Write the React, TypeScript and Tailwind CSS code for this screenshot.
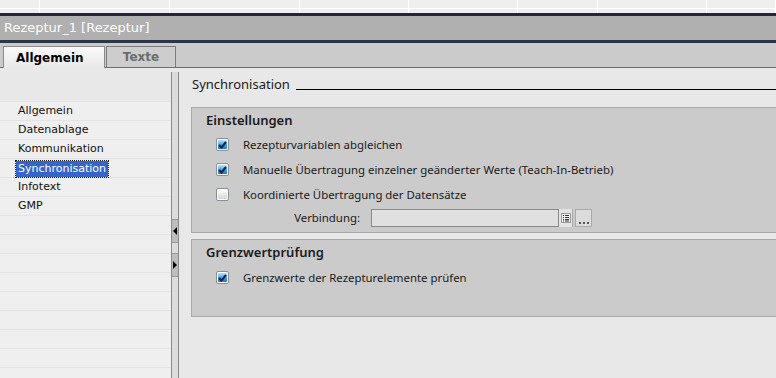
import React from 'react'

const NAV = ['Allgemein', 'Datenablage', 'Kommunikation', 'Synchronisation', 'Infotext', 'GMP']
const GRID_COLS = [40, 130, 130, 109, 109, 80, 109, 69]

function CheckBox({ checked }: { checked: boolean }) {
  return (
    <div className="w-[13px] h-[13px] rounded-[2px] border border-[#8a8f96] bg-white p-[1px] shrink-0">
      {checked ? (
        <div className="w-full h-full rounded-[1px] bg-gradient-to-b from-[#b9e4fb] via-[#4aa6e6] to-[#1d73c4] flex items-center justify-center">
          <svg width="9" height="8" viewBox="0 0 9 8">
            <path d="M1 4 L3.5 6.5 L8 1" fill="none" stroke="#15244f" strokeWidth="2" />
          </svg>
        </div>
      ) : (
        <div className="w-full h-full rounded-[1px] bg-gradient-to-b from-[#fbfbfb] to-[#d6d6d6]" />
      )}
    </div>
  )
}

function CheckRow({ checked, label }: { checked: boolean; label: string }) {
  return (
    <div className="h-[25px] flex items-center pl-[24px] gap-[14px]">
      <CheckBox checked={checked} />
      <span className="text-[11.4px] text-[#1a1a1a]">{label}</span>
    </div>
  )
}

export default function App() {
  return (
    <div className="w-[776px] h-[378px] overflow-hidden flex flex-col bg-[#e8e8e8] font-['Noto_Sans',sans-serif]">
      {/* Tabelle im Hintergrund */}
      <div className="h-[13px] flex bg-[#efefef] shrink-0">
        {GRID_COLS.map((w, i) => (
          <div key={i} className="h-full border-r border-white shrink-0" style={{ width: w }}>
            <div className="h-[9px] border-b border-white" />
          </div>
        ))}
      </div>
      <div className="h-[3px] bg-[#22283a] shrink-0" />

      {/* Titelleiste */}
      <div className="h-[24px] bg-[#b0b0b0] flex items-center pl-[4px] shrink-0">
        <span className="text-[13px] text-white font-['DejaVu_Sans',sans-serif]">Rezeptur_1 [Rezeptur]</span>
      </div>
      <div className="h-[3px] bg-[#2c3447] shrink-0" />

      {/* Reiter */}
      <div className="h-[25px] bg-[#cbcbcb] border-b border-[#6e6e6e] flex items-end pl-[3px] shrink-0 font-['DejaVu_Sans',sans-serif]">
        <div className="w-[102px] h-[22px] -mb-px border border-b-0 border-[#8a8a8a] bg-gradient-to-b from-[#fafafa] to-[#e8e8e8] flex items-center pl-[12px]">
          <span className="text-[12px] font-bold text-black">Allgemein</span>
        </div>
        <div className="w-[70px] h-[21px] ml-px border border-b-0 border-[#7c7c7c] bg-[#cdcdcd] flex items-center justify-center">
          <span className="text-[12px] font-bold text-[#6b6b6b]">Texte</span>
        </div>
      </div>

      <div className="flex-1 flex min-h-0">
        {/* Navigation */}
        <div className="w-[171px] pt-[33px] shrink-0 overflow-hidden font-['DejaVu_Sans',sans-serif]">
          <div className="border-t border-[#e4e4e4]">
            {Array.from({ length: 16 }).map((_, i) => (
              <div key={i} className="h-[19px] bg-[#efefef] border-b border-[#e4e4e4] flex items-center pl-[16px] pt-[1px]">
                {NAV[i] && (
                  <span
                    className={
                      NAV[i] === 'Synchronisation'
                        ? 'text-[11px] px-[2px] leading-[16px] bg-[#3565c9] text-white outline-1 outline-dotted outline-[#1a1a1a]'
                        : 'text-[11px] px-[2px] text-[#111]'
                    }
                  >
                    {NAV[i]}
                  </span>
                )}
              </div>
            ))}
          </div>
        </div>

        {/* Splitter */}
        <div className="w-[8px] mt-[4px] shrink-0 border-x border-[#8a8a8a] bg-[#dcdcdc] flex flex-col">
          <div className="h-[147px]" />
          <div className="h-[24px] bg-[#bdbdbd] border-y border-[#9a9a9a] flex items-center justify-center">
            <div className="w-0 h-0 border-y-[4px] border-y-transparent border-r-[4px] border-r-black" />
          </div>
          <div className="h-[10px]" />
          <div className="h-[24px] bg-[#bdbdbd] border-y border-[#9a9a9a] flex items-center justify-center">
            <div className="w-0 h-0 border-y-[4px] border-y-transparent border-l-[4px] border-l-black" />
          </div>
        </div>

        {/* Inhalt */}
        <div className="flex-1 pl-[12px] min-w-0">
          <div className="h-[25px] pt-[10px] flex items-end">
            <span className="text-[13px] leading-[17px] text-[#1a1a1a] pl-[1px]">Synchronisation</span>
            <div className="flex-1 ml-[6px] mb-[3px] border-b border-black" />
          </div>

          <div className="mt-[14px] h-[126px] border border-r-0 border-[#a8a8a8] bg-[#cbcbcb]">
            <div className="h-[24px] flex items-center pl-[14px] pt-[1px]">
              <span className="text-[13px] font-semibold text-[#1a1a1a]">Einstellungen</span>
            </div>
            <CheckRow checked label="Rezepturvariablen abgleichen" />
            <CheckRow checked label="Manuelle Übertragung einzelner geänderter Werte (Teach-In-Betrieb)" />
            <CheckRow checked={false} label="Koordinierte Übertragung der Datensätze" />
            <div className="h-[22px] flex items-center">
              <span className="w-[168px] pl-[1px] text-right text-[11.4px] text-[#1a1a1a]">Verbindung:</span>
              <div className="ml-[11px] w-[188px] h-[18px] border border-[#8a8a8a] bg-[#e0e0e0]" />
              <div className="w-[14px] h-[18px] bg-[#e4e4e4] border-r border-[#a8a8a8] flex items-center justify-center">
                <svg width="10" height="10" viewBox="0 0 10 10">
                  <rect x="0.5" y="0.5" width="9" height="9" fill="#f4f4f4" stroke="#9a9a9a" />
                  <path d="M2 2.5h1M4 2.5h4M2 4.5h1M4 4.5h4M2 6.5h1M4 6.5h4M2 8h1M4 8h4" stroke="#333" strokeWidth="1" />
                </svg>
              </div>
              <div className="ml-[2px] w-[17px] h-[18px] border border-[#aaaaaa] bg-[#dcdcdc] flex items-end justify-center pb-[2px] gap-[2px]">
                <div className="w-[2px] h-[2px] bg-[#555]" />
                <div className="w-[2px] h-[2px] bg-[#555]" />
                <div className="w-[2px] h-[2px] bg-[#555]" />
              </div>
            </div>
          </div>

          <div className="mt-[6px] h-[78px] border border-r-0 border-[#a8a8a8] bg-[#cbcbcb]">
            <div className="h-[25px] flex items-center pl-[14px] pt-[1px]">
              <span className="text-[13px] font-semibold text-[#1a1a1a]">Grenzwertprüfung</span>
            </div>
            <CheckRow checked label="Grenzwerte der Rezepturelemente prüfen" />
          </div>
        </div>
      </div>
    </div>
  )
}
